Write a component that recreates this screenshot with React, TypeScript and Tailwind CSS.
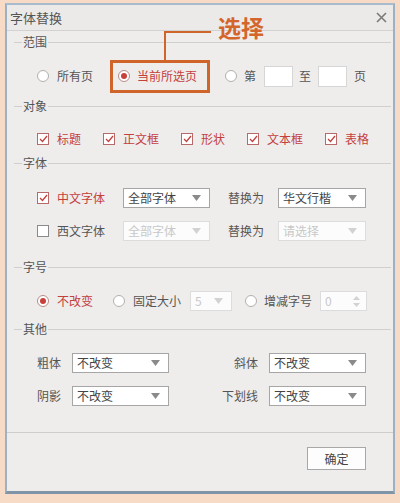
import React from "react";

const RED = "text-[#c4403c]";

function Radio({ checked }: { checked?: boolean }) {
  return (
    <span
      className={
        "flex h-[12px] w-[12px] shrink-0 items-center justify-center rounded-full border bg-white " +
        (checked ? "border-[#b88a88]" : "border-[#b0b0b0]")
      }
    >
      {checked && <span className="block h-[6px] w-[6px] rounded-full bg-[#c8403c]" />}
    </span>
  );
}

function Check({ checked }: { checked?: boolean }) {
  return (
    <span
      className={
        "flex h-[12px] w-[12px] shrink-0 items-center justify-center border bg-white " +
        (checked ? "border-[#b86a6a]" : "border-[#8a8a8a]")
      }
    >
      {checked && (
        <svg width="9" height="8" viewBox="0 0 9 8">
          <path d="M1 4 L3.5 6.5 L8 1" fill="none" stroke="#c4403c" strokeWidth="1.3" />
        </svg>
      )}
    </span>
  );
}

function Arrow({ disabled }: { disabled?: boolean }) {
  return (
    <svg width="9" height="6" viewBox="0 0 9 6" className="shrink-0">
      <path d="M0 0 L9 0 L4.5 6 Z" fill={disabled ? "#d2d2d2" : "#8a8a8a"} />
    </svg>
  );
}

function Select({ text, w, disabled }: { text: string; w: string; disabled?: boolean }) {
  return (
    <div
      className={
        "flex h-[20px] shrink-0 items-center justify-between border pl-[4px] pr-[8px] " +
        w +
        (disabled
          ? " border-[#dcdcdc] bg-[#fcfcfc] text-[#c8c8c8]"
          : " border-[#a6a6a6] bg-white text-[#444]")
      }
    >
      <span className="leading-none">{text}</span>
      <Arrow disabled={disabled} />
    </div>
  );
}

function Header({ label }: { label: string }) {
  return (
    <div className="flex h-[22px] items-center">
      <div className="ml-[7px] h-px w-[8px] bg-[#cfcfcf]" />
      <span className="px-[1px] leading-none text-[#555]">{label}</span>
      <div className="mr-[2px] h-px flex-1 bg-[#cfcfcf]" />
    </div>
  );
}

export default function App() {
  return (
    <div className="relative h-[503px] w-[400px] bg-[#f8dbc6] pl-[5px] pt-[3px] font-['Noto_Sans_CJK_SC','Liberation_Sans',sans-serif] text-[12px]">
      <div className="flex h-[491px] w-[390px] flex-col border-x-2 border-t-2 border-b-[3px] border-x-[#9db1c4] border-t-[#a9bccd] border-b-[#7f94a6] bg-[#efedec]">
        {/* title bar */}
        <div className="flex h-[26px] shrink-0 items-center justify-between border-b border-[#d2d2d2] bg-[#ebeae9] pl-[3px] pr-[3px]">
          <span className="text-[13px] leading-none text-[#555]">字体替换</span>
          <svg width="11" height="11" viewBox="0 0 11 11" className="mr-[3px]">
            <path d="M1 1 L10 10 M10 1 L1 10" stroke="#7a7a7a" strokeWidth="1.6" />
          </svg>
        </div>

        {/* 范围 */}
        <Header label="范围" />
        <div className="flex h-[42px] items-center pl-[30px] pt-[4px] text-[#555]">
          <Radio />
          <span className="ml-[8px] leading-none">所有页</span>
          <div className="ml-[17px] flex h-[33px] items-center border-[3px] border-[#d0652b] pl-[5px] pr-[10px]">
            <Radio checked />
            <span className={"ml-[7px] leading-none " + RED}>当前所选页</span>
          </div>
          <div className="ml-[15px]">
            <Radio />
          </div>
          <span className="ml-[7px] leading-none">第</span>
          <div className="ml-[8px] h-[21px] w-[29px] border border-[#d6d6d6] bg-white" />
          <span className="ml-[6px] leading-none">至</span>
          <div className="ml-[7px] h-[21px] w-[29px] border border-[#d6d6d6] bg-white" />
          <span className="ml-[7px] leading-none">页</span>
        </div>

        {/* 对象 */}
        <Header label="对象" />
        <div className={"flex h-[35px] items-center gap-[22px] pl-[30px] pt-[8px] " + RED}>
          {["标题", "正文框", "形状", "文本框", "表格"].map((t) => (
            <div key={t} className="flex items-center">
              <Check checked />
              <span className="ml-[8px] leading-none">{t}</span>
            </div>
          ))}
        </div>

        {/* 字体 */}
        <Header label="字体" />
        <div className="flex flex-col pb-[9px] pt-[7px]">
          <div className="flex h-[33px] items-center pl-[30px]">
            <Check checked />
            <span className={"ml-[8px] w-[48px] leading-none " + RED}>中文字体</span>
            <div className="ml-[18px]">
              <Select text="全部字体" w="w-[87px]" />
            </div>
            <span className="ml-[18px] w-[36px] leading-none text-[#555]">替换为</span>
            <div className="ml-[14px]">
              <Select text="华文行楷" w="w-[88px]" />
            </div>
          </div>
          <div className="flex h-[33px] items-center pl-[30px]">
            <Check />
            <span className="ml-[8px] w-[48px] leading-none text-[#555]">西文字体</span>
            <div className="ml-[18px]">
              <Select text="全部字体" w="w-[87px]" disabled />
            </div>
            <span className="ml-[18px] w-[36px] leading-none text-[#555]">替换为</span>
            <div className="ml-[14px]">
              <Select text="请选择" w="w-[88px]" disabled />
            </div>
          </div>
        </div>

        {/* 字号 */}
        <Header label="字号" />
        <div className="flex h-[40px] items-center pl-[30px] pt-[6px] text-[#555]">
          <Radio checked />
          <span className={"ml-[8px] w-[36px] leading-none " + RED}>不改变</span>
          <div className="ml-[20px]">
            <Radio />
          </div>
          <span className="ml-[8px] w-[48px] leading-none">固定大小</span>
          <div className="ml-[9px]">
            <Select text="5" w="w-[42px]" disabled />
          </div>
          <div className="ml-[13px]">
            <Radio />
          </div>
          <span className="ml-[7px] w-[48px] leading-none">增减字号</span>
          <div className="ml-[8px] flex h-[20px] w-[47px] items-center justify-between border border-[#dcdcdc] bg-[#fcfcfc] pl-[4px] pr-[6px] text-[#c8c8c8]">
            <span className="leading-none">0</span>
            <div className="flex flex-col gap-[3px]">
              <svg width="7" height="4" viewBox="0 0 7 4">
                <path d="M0 4 L7 4 L3.5 0 Z" fill="#d2d2d2" />
              </svg>
              <svg width="7" height="4" viewBox="0 0 7 4">
                <path d="M0 0 L7 0 L3.5 4 Z" fill="#d2d2d2" />
              </svg>
            </div>
          </div>
        </div>

        {/* 其他 */}
        <Header label="其他" />
        <div className="flex flex-col pb-[20px] pt-[6px] text-[#555]">
          <div className="flex h-[33px] items-center pl-[30px]">
            <span className="w-[24px] leading-none">粗体</span>
            <div className="ml-[11px]">
              <Select text="不改变" w="w-[97px]" />
            </div>
            <span className="ml-[41px] w-[48px] text-right leading-none">斜体</span>
            <div className="ml-[11px]">
              <Select text="不改变" w="w-[97px]" />
            </div>
          </div>
          <div className="flex h-[33px] items-center pl-[30px]">
            <span className="w-[24px] leading-none">阴影</span>
            <div className="ml-[11px]">
              <Select text="不改变" w="w-[97px]" />
            </div>
            <span className="ml-[41px] w-[48px] text-right leading-none">下划线</span>
            <div className="ml-[11px]">
              <Select text="不改变" w="w-[97px]" />
            </div>
          </div>
        </div>

        {/* footer */}
        <div className="flex flex-1 justify-end border-t border-[#cdcdcd] pr-[27px] pt-[14px]">
          <div className="flex h-[23px] w-[59px] items-center justify-center border border-[#a8a8a8] bg-[#fdfdfd] leading-none text-[#444]">
            确定
          </div>
        </div>
      </div>

      {/* callout annotation */}
      <div className="absolute left-[164px] top-[31px] h-[2px] w-[47px] bg-[#d0652b]" />
      <div className="absolute left-[164px] top-[31px] h-[29px] w-[2px] bg-[#d0652b]" />
      <div className="absolute left-[218px] top-[16px] text-[23px] font-bold leading-none text-[#d4662b]">
        选择
      </div>
    </div>
  );
}
